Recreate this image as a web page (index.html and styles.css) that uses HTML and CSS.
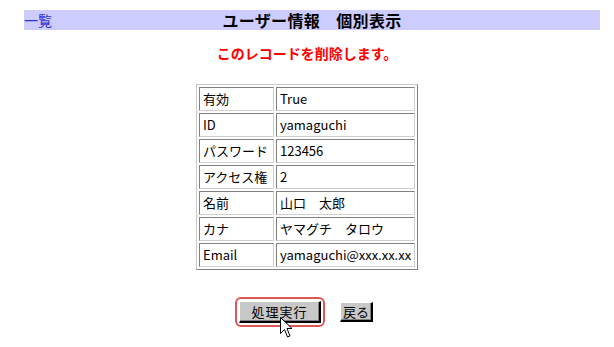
FILE: index.html
```html
<!DOCTYPE html>
<html lang="ja">
<head>
<meta charset="utf-8">
<title>ユーザー情報 個別表示</title>
<link rel="stylesheet" href="styles.css">
</head>
<body>
<div class="header">
  <div class="header-left"><a class="list-link" href="#">一覧</a></div>
  <div class="title">ユーザー情報　個別表示</div>
  <div class="header-right"></div>
</div>
<p class="message">このレコードを削除します。</p>
<table class="record">
  <colgroup><col class="col-label"><col class="col-value"></colgroup>
  <tr><td>有効</td><td>True</td></tr>
  <tr><td>ID</td><td>yamaguchi</td></tr>
  <tr><td>パスワード</td><td>123456</td></tr>
  <tr><td>アクセス権</td><td>2</td></tr>
  <tr><td>名前</td><td>山口　太郎</td></tr>
  <tr><td>カナ</td><td>ヤマグチ　タロウ</td></tr>
  <tr><td>Email</td><td>yamaguchi@xxx.xx.xx</td></tr>
</table>
<div class="actions">
  <span class="focus-ring">
    <button class="btn btn-exec" type="button">処理実行</button>
    <svg class="cursor" width="14" height="22" viewBox="0 0 14 22">
      <path d="M0.5 0.5 L0.5 16.5 L4.5 12.5 L7.5 20 L10 19 L7 11.5 L12 11.5 Z" fill="#fff" stroke="#000" stroke-width="1"/>
    </svg>
  </span>
  <button class="btn btn-back" type="button">戻る</button>
</div>
</body>
</html>
```

FILE: styles.css
```css
html, body {
  margin: 0;
  padding: 0;
  background: #ffffff;
}
body {
  width: 614px;
  height: 347px;
  font-family: "Noto Sans CJK JP", "DejaVu Sans", sans-serif;
  font-size: 13px;
  color: #000;
}
.header {
  margin: 10px 14px 0 24px;
  height: 20px;
  display: grid;
  grid-template-columns: 1fr auto 1fr;
  align-items: center;
  background: #ccccff;
}
.header-left {
  padding-left: 0;
}
.list-link {
  color: #3333dd;
  text-decoration: none;
  font-size: 14px;
  line-height: 20px;
}
.title {
  font-size: 16px;
  font-weight: bold;
  line-height: 20px;
  letter-spacing: 0.3px;
}
.message {
  margin: 14px 0 0;
  text-align: center;
  color: #ff0000;
  font-weight: bold;
  font-size: 14px;
  line-height: 18px;
}
.record {
  margin: 22px auto 0;
  border-collapse: separate;
  border-spacing: 2px;
  table-layout: fixed;
  width: 222px;
  border-style: solid;
  border-width: 1px;
  border-color: #c8c8c8 #808080 #808080 #c8c8c8;
}
.col-label { width: 75px; }
.col-value { width: 139px; }
.record td {
  height: 24px;
  box-sizing: border-box;
  padding: 3px 3px;
  line-height: 16px;
  white-space: nowrap;
  overflow: hidden;
  border-style: solid;
  border-width: 1px;
  border-color: #808080 #d0d0d0 #d0d0d0 #808080;
}
.actions {
  margin-top: 27px;
  display: flex;
  justify-content: center;
  align-items: center;
  gap: 15px;
  padding-right: 6px;
}
.focus-ring {
  position: relative;
  display: inline-flex;
  padding: 2px;
  border: 2px solid #e05555;
  border-radius: 6px;
}
.btn {
  font-family: "Noto Sans CJK JP", "DejaVu Sans", sans-serif;
  font-size: 13px;
  line-height: 15px;
  background: #c8c8c8;
  color: #000;
  border-style: solid;
  border-width: 1px 2px 2px 1px;
  border-color: #ffffff #000000 #000000 #ffffff;
  box-shadow: inset -1px -1px 0 #808080;
  border-radius: 0;
  margin: 0;
}
.btn-exec {
  width: 82px;
  height: 22px;
  padding: 0 4px;
  letter-spacing: 1px;
}
.btn-back {
  width: 33px;
  height: 20px;
  padding: 0 2px;
}
.cursor {
  position: absolute;
  left: 43px;
  top: 18px;
}
```
